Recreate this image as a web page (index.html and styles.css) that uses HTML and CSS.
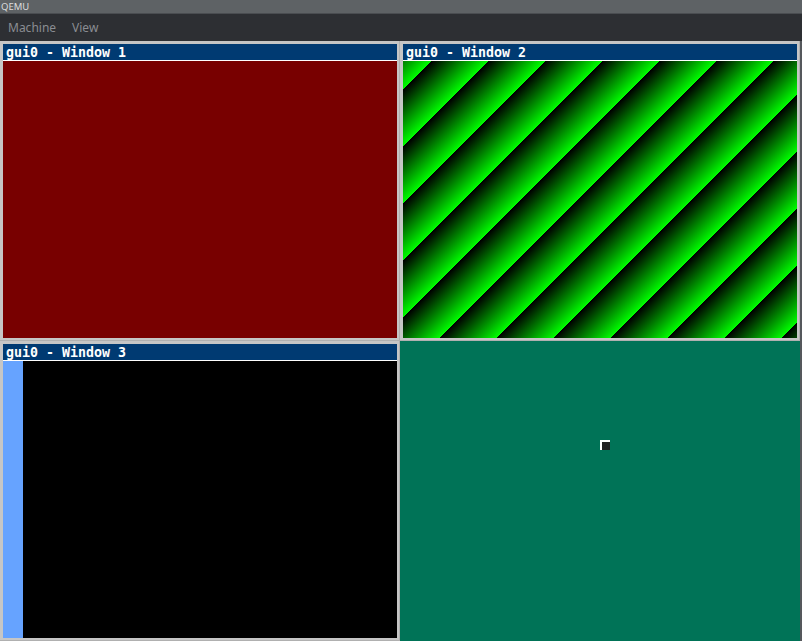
FILE: index.html
```html
<!DOCTYPE html>
<html>
<head>
<meta charset="utf-8">
<title>QEMU</title>
<link rel="stylesheet" href="styles.css">
</head>
<body>
<div class="app">
  <div class="titlebar">QEMU</div>
  <div class="menubar">
    <span class="menu-item">Machine</span>
    <span class="menu-item">View</span>
  </div>
  <div class="display">
    <div class="guest">
      <div class="window">
        <div class="win-title">gui0 - Window 1</div>
        <div class="win-body red"></div>
      </div>
      <div class="window">
        <div class="win-title">gui0 - Window 2</div>
        <div class="win-body stripes"></div>
      </div>
      <div class="window">
        <div class="win-title">gui0 - Window 3</div>
        <div class="win-body term">
          <div class="term-bar"></div>
          <div class="term-main"></div>
        </div>
      </div>
      <div class="desktop">
        <div class="cursor"></div>
      </div>
    </div>
  </div>
</div>
</body>
</html>
```
FILE: styles.css
```css
html, body {
  margin: 0;
  padding: 0;
  background: #2d2f33;
}
.app {
  width: 802px;
  height: 641px;
  display: flex;
  flex-direction: column;
  overflow: hidden;
}
.titlebar {
  height: 13px;
  background: #5e6265;
  color: #dcdcdc;
  font-family: "Noto Sans", sans-serif;
  font-size: 9.5px;
  line-height: 13px;
  padding-left: 1px;
  border-bottom: 1px solid #4a4d51;
}
.menubar {
  height: 27px;
  background: #2d2f33;
  display: flex;
  align-items: center;
  gap: 16px;
  padding-left: 8px;
  font-family: "Noto Sans", sans-serif;
  font-size: 12px;
  color: #8a8d92;
}
.display {
  height: 600px;
  display: flex;
  background: #55585c;
}
.guest {
  width: 800px;
  height: 600px;
  display: grid;
  grid-template-columns: 400px 400px;
  grid-template-rows: 300px 300px;
  background: #c4c4c4;
}
.window {
  display: flex;
  flex-direction: column;
  padding: 3px;
  background: #c6c6c6;
  box-shadow: inset -1px -1px 0 #b0b0b0;
}
.win-title {
  height: 16px;
  background: #003a72;
  color: #ffffff;
  border-bottom: 1px solid #ffffff;
  font-family: "DejaVu Sans Mono", "Liberation Mono", monospace;
  font-weight: bold;
  font-size: 13.3px;
  line-height: 17px;
  padding-left: 3px;
  white-space: pre;
}
.win-body {
  flex: 1;
}
.red {
  background: #780000;
}
.stripes {
  background: repeating-linear-gradient(135deg, #000000 -19.8px, #00ff00 20.5px);
}
.term {
  display: flex;
}
.term-bar {
  width: 20px;
  background: #66a3ff;
}
.term-main {
  flex: 1;
  background: #000000;
}
.desktop {
  background: #007357;
  position: relative;
}
.cursor {
  position: absolute;
  left: 200px;
  top: 99px;
  width: 8px;
  height: 8px;
  background: #222222;
  border-top: 2px solid #ffffff;
  border-left: 2px solid #ffffff;
}
```
